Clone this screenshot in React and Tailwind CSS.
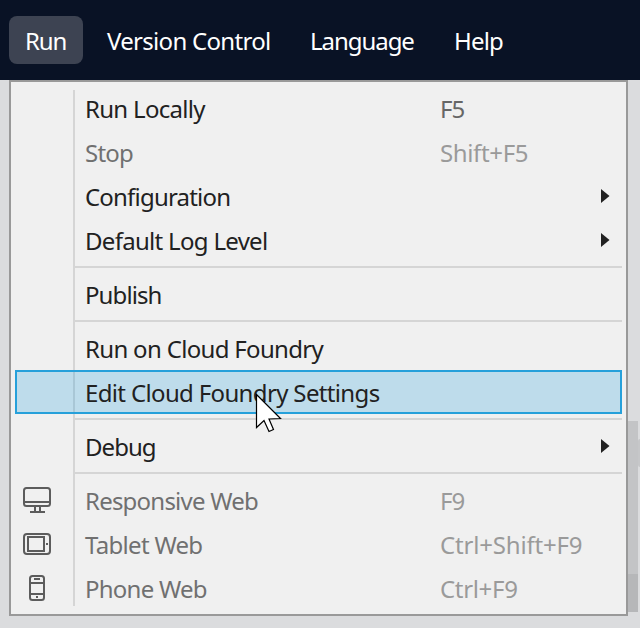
import React from "react";

const items = [
  { label: "Run Locally", tracking: "tracking-[-0.7px]", shortcut: "F5", keys: "tracking-[-1px] text-[#666666]" },
  { label: "Stop", tracking: "tracking-[-0.75px]", shortcut: "Shift+F5", keys: "tracking-[-0.37px] text-[#9a9a9a]", disabled: true },
  { label: "Configuration", tracking: "tracking-[-0.8px]", submenu: true },
  { label: "Default Log Level", tracking: "tracking-[-0.7px]", submenu: true },
  { separator: true },
  { label: "Publish", tracking: "tracking-[-0.9px]" },
  { separator: true },
  { label: "Run on Cloud Foundry", tracking: "tracking-[-0.68px]" },
  { label: "Edit Cloud Foundry Settings", tracking: "tracking-[-0.65px]", selected: true },
  { separator: true },
  { label: "Debug", tracking: "tracking-[-0.95px]", submenu: true },
  { separator: true },
  { label: "Responsive Web", tracking: "tracking-[-0.78px]", shortcut: "F9", keys: "tracking-[-1px] text-[#9a9a9a]", disabled: true, icon: "monitor" },
  { label: "Tablet Web", tracking: "tracking-[-0.7px]", shortcut: "Ctrl+Shift+F9", keys: "tracking-[-0.18px] text-[#9a9a9a]", disabled: true, icon: "tablet" },
  { label: "Phone Web", tracking: "tracking-[-0.75px]", shortcut: "Ctrl+F9", keys: "tracking-[-0.33px] text-[#9a9a9a]", disabled: true, icon: "phone" },
];

function DeviceIcon({ name }) {
  return (
    <svg width="30" height="30" viewBox="0 0 30 30" fill="none" stroke="#5c5c5c" strokeWidth="2">
      {name === "monitor" && (
        <>
          <rect x="2" y="3" width="26" height="18" rx="2.5" />
          <path d="M2 17h26M13 21v5M18 21v5M8 27h15" />
        </>
      )}
      {name === "tablet" && (
        <>
          <rect x="2" y="5" width="26" height="20" rx="3" />
          <rect x="6" y="8" width="16" height="14" />
          <path d="M24 15h2" />
        </>
      )}
      {name === "phone" && (
        <>
          <rect x="8" y="3" width="14" height="24" rx="2.5" />
          <path d="M8 10h14M8 21h14" />
          <path d="M12 6h6M14 24h2" />
        </>
      )}
    </svg>
  );
}

function MenuItem({ item }) {
  if (item.separator) {
    return (
      <div className="h-[10px] pt-1 pl-[60px]">
        <div className="h-[2px] bg-[#d5d5d5]" />
      </div>
    );
  }
  return (
    <div
      className={
        "flex h-11 items-center border-2 leading-[40px] " +
        (item.selected ? "border-[#26a0da] bg-[#26a0da]/25 " : "border-transparent ") +
        (item.disabled ? "text-[#707070]" : "text-[#212121]")
      }
    >
      <div className="flex w-[68px] shrink-0 pl-[5px]">{item.icon && <DeviceIcon name={item.icon} />}</div>
      <div className={"w-[355px] shrink-0 whitespace-nowrap pt-px " + item.tracking}>{item.label}</div>
      {item.shortcut && <div className={"whitespace-nowrap pt-px " + item.keys}>{item.shortcut}</div>}
      {item.submenu && (
        <svg className="ml-[161px] shrink-0" width="9" height="14" viewBox="0 0 9 14">
          <path d="M0 0L8.5 7L0 14Z" fill="#212121" />
        </svg>
      )}
    </div>
  );
}

export default function App() {
  return (
    <div className="relative h-[628px] w-[640px] overflow-hidden bg-[#dbdcde] font-['Noto_Sans','Open_Sans',sans-serif] text-[24px]">
      <nav className="flex h-20 items-center bg-[#091225] pl-[9px] leading-[50px] text-white">
        <div className="h-12 w-[74px] rounded-lg bg-[#3d4352] pl-4 tracking-[-1.1px]">Run</div>
        <div className="h-12 w-[203px] whitespace-nowrap pl-6 tracking-[-0.7px]">Version Control</div>
        <div className="h-12 w-[144px] whitespace-nowrap pl-6 tracking-[-1.05px]">Language</div>
        <div className="h-12 whitespace-nowrap pl-6 tracking-[-0.8px]">Help</div>
      </nav>
      <main className="flex pl-[9px]">
        <div className="relative h-[536px] w-[619px] shrink-0 border-2 border-[#999999] bg-[#f0f0f0] p-1">
          <div className="absolute top-2 left-[62px] h-[516px] w-[2px] bg-[#d5d5d5]" />
          <div className="relative">
            {items.map((item, i) => (
              <MenuItem key={i} item={item} />
            ))}
          </div>
        </div>
        <div className="mt-[341px] w-[10px] shrink-0">
          <div className="h-[153px] bg-[#c3c4c6]" />
          <div className="h-[38px] bg-[#b6b7b9]" />
        </div>
        <div className="mt-[359px] h-[28px] w-[2px] shrink-0 rounded-l bg-[#c6c7c9]" />
      </main>
      <svg className="absolute top-[393px] left-[255px]" width="28" height="41" viewBox="0 0 28 41">
        <path d="M1.5 1.5V34.5L9 27.5L14 38.5L18.5 36.5L14 26L25.5 25.5Z" fill="white" stroke="black" strokeWidth="1.2" />
      </svg>
    </div>
  );
}
